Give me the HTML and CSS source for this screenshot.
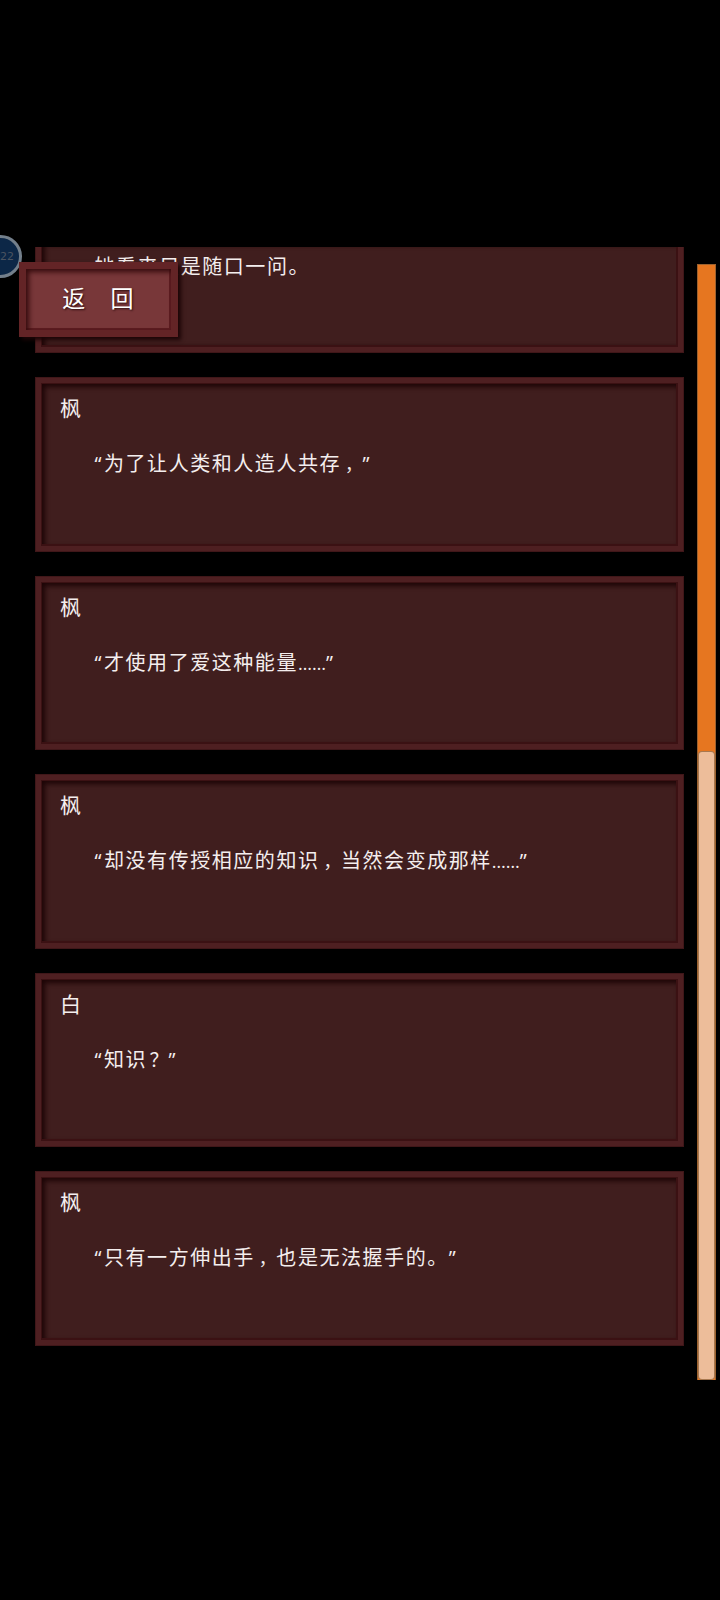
FILE: index.html
```html
<!DOCTYPE html>
<html lang="zh-CN">
<head>
<meta charset="utf-8">
<title>对话记录</title>
<link rel="stylesheet" href="styles.css">
</head>
<body>
<main class="screen">
  <section class="log">
    <article class="card card-cut"><div class="panel">
      <p class="line narration">她看来只是随口一问。</p>
    </div></article>
    <article class="card"><div class="panel">
      <h2 class="name">枫</h2>
      <p class="line"><span class="quote">“</span>为了让人类和人造人共存<span class="comma">，</span><span class="quote">”</span></p>
    </div></article>
    <article class="card"><div class="panel">
      <h2 class="name">枫</h2>
      <p class="line"><span class="quote">“</span>才使用了爱这种能量<span class="dots">……</span><span class="quote">”</span></p>
    </div></article>
    <article class="card"><div class="panel">
      <h2 class="name">枫</h2>
      <p class="line"><span class="quote">“</span>却没有传授相应的知识<span class="comma">，</span>当然会变成那样<span class="dots">……</span><span class="quote">”</span></p>
    </div></article>
    <article class="card"><div class="panel">
      <h2 class="name">白</h2>
      <p class="line"><span class="quote">“</span>知识<span class="question">？</span><span class="quote">”</span></p>
    </div></article>
    <article class="card"><div class="panel">
      <h2 class="name">枫</h2>
      <p class="line"><span class="quote">“</span>只有一方伸出手<span class="comma">，</span>也是无法握手的。<span class="quote">”</span></p>
    </div></article>
  </section>
  <div class="scrollbar"><div class="thumb"></div></div>
  <div class="badge">22</div>
  <button class="back" type="button">返　回</button>
</main>
</body>
</html>
```

FILE: styles.css
```css
* { box-sizing: border-box; }
body {
  margin: 0;
  background: #000;
  color: #f4eeee;
  font-family: "Noto Sans CJK SC", sans-serif;
}
.screen {
  position: relative;
  display: flex;
  align-items: flex-start;
  width: 720px;
  height: 1600px;
  padding: 246.9px 4px 0 35px;
  overflow: hidden;
}
.log {
  display: flex;
  flex-direction: column;
  gap: 24px;
  width: 649px;
}
.card {
  height: 174.5px;
  padding: 5px;
  background: #4e1f21;
  border: 1px solid #401719;
}
.panel {
  height: 100%;
  padding: 8px 0 0 18px;
  background: #401e1e;
  border: 1px solid #3b1113;
  border-width: 1px 2px 2px 1px;
  box-shadow: inset 3px 3px 5px #1d0506;
}
.card-cut {
  height: 106.2px;
  padding-top: 0;
  border-top: 0;
}
.card-cut .panel {
  padding-top: 4px;
  border-top: 0;
  box-shadow: inset 5px 0 5px -2px #1d0506;
}
.name {
  margin: 0;
  font-size: 21px;
  font-weight: 400;
  line-height: 30px;
}
.line {
  margin: 26px 0 0 34.5px;
  font-size: 20px;
  line-height: 30px;
  letter-spacing: 1.55px;
  white-space: nowrap;
}
.narration { margin-top: 0; }
.quote {
  display: inline-block;
  width: 9.5px;
  font-family: "Open Sans", sans-serif;
  letter-spacing: 0;
}
.dots {
  display: inline-block;
  width: 28px;
  font-family: "Open Sans", sans-serif;
  font-size: 18px;
  letter-spacing: 0;
}
.comma,
.question {
  display: inline-block;
  width: 21.5px;
  letter-spacing: 0;
}
.comma {
  padding-left: 4px;
  font-size: 17.5px;
}
.question {
  padding-left: 2.5px;
  font-size: 19px;
}
.scrollbar {
  width: 19px;
  height: 1116px;
  margin: 17.2px 0 0 13px;
  padding: 487px 1px 1px;
  background: #e67620;
  border: 1px solid #9d622f;
  border-width: 1px 1px 0 1px;
}
.thumb {
  height: 100%;
  background: #edbd9a;
  border-radius: 3px;
  box-shadow: 0 0 0 1px #a77850;
}
.badge {
  position: absolute;
  left: -21px;
  top: 235px;
  width: 43px;
  height: 43px;
  padding-left: 18px;
  border: 3px solid #737f8b;
  border-radius: 50%;
  background: #0c2747;
  color: #4a5360;
  font: 11px/37px "DejaVu Sans", sans-serif;
}
.back {
  position: absolute;
  left: 19px;
  top: 262px;
  width: 159px;
  height: 75px;
  padding: 0 0 5px 0;
  border: 7px solid #632426;
  background: #783739;
  box-shadow: inset 3px 3px 5px #360c0e, inset -2px -2px 0 #5c1c20, 3px 3px 4px #1c0506;
  color: #fff;
  font: 23px/30px "Noto Sans CJK SC", sans-serif;
  letter-spacing: 1.2px;
  text-shadow: 1px 1px 2px #2b0c0d;
}
```
